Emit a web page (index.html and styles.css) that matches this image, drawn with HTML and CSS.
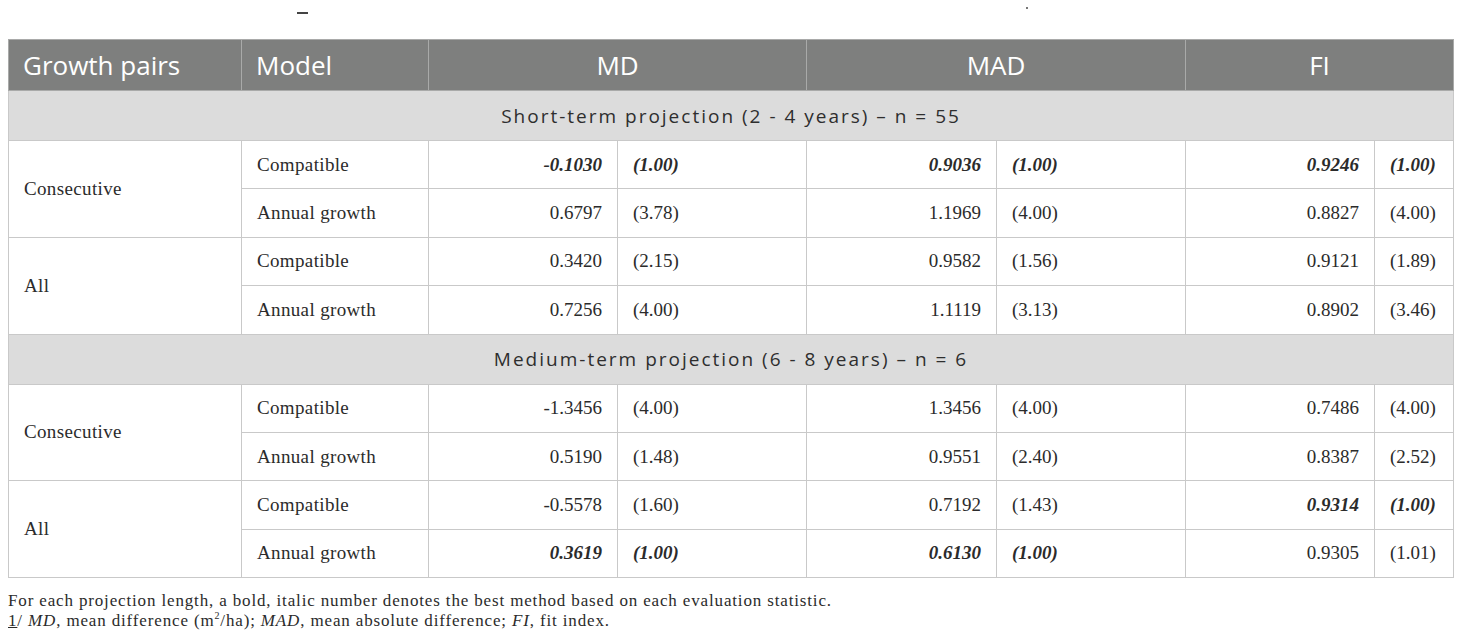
FILE: index.html
```html
<!DOCTYPE html>
<html>
<head>
<meta charset="utf-8">
<link rel="stylesheet" href="styles.css">
</head>
<body>
<div class="remnant"><span class="dash"></span><span class="dot"></span></div>
<table class="tbl">
<colgroup>
<col class="c-pair"><col class="c-model"><col class="c-val"><col class="c-rank"><col class="c-val2"><col class="c-rank"><col class="c-val"><col class="c-rank-last">
</colgroup>
<thead>
<tr class="head">
<th class="left">Growth pairs</th>
<th class="left">Model</th>
<th colspan="2">MD</th>
<th colspan="2">MAD</th>
<th colspan="2">FI</th>
</tr>
</thead>
<tbody>
<tr class="section"><td colspan="8">Short-term projection (2 - 4 years) – n = 55</td></tr>
<tr><td rowspan="2" class="grp">Consecutive</td><td class="mdl">Compatible</td><td class="num best">-0.1030</td><td class="rk best">(1.00)</td><td class="num best">0.9036</td><td class="rk best">(1.00)</td><td class="num best">0.9246</td><td class="rk best">(1.00)</td></tr>
<tr><td class="mdl">Annual growth</td><td class="num">0.6797</td><td class="rk">(3.78)</td><td class="num">1.1969</td><td class="rk">(4.00)</td><td class="num">0.8827</td><td class="rk">(4.00)</td></tr>
<tr><td rowspan="2" class="grp">All</td><td class="mdl">Compatible</td><td class="num">0.3420</td><td class="rk">(2.15)</td><td class="num">0.9582</td><td class="rk">(1.56)</td><td class="num">0.9121</td><td class="rk">(1.89)</td></tr>
<tr><td class="mdl">Annual growth</td><td class="num">0.7256</td><td class="rk">(4.00)</td><td class="num">1.1119</td><td class="rk">(3.13)</td><td class="num">0.8902</td><td class="rk">(3.46)</td></tr>
<tr class="section"><td colspan="8">Medium-term projection (6 - 8 years) – n = 6</td></tr>
<tr><td rowspan="2" class="grp">Consecutive</td><td class="mdl">Compatible</td><td class="num">-1.3456</td><td class="rk">(4.00)</td><td class="num">1.3456</td><td class="rk">(4.00)</td><td class="num">0.7486</td><td class="rk">(4.00)</td></tr>
<tr><td class="mdl">Annual growth</td><td class="num">0.5190</td><td class="rk">(1.48)</td><td class="num">0.9551</td><td class="rk">(2.40)</td><td class="num">0.8387</td><td class="rk">(2.52)</td></tr>
<tr><td rowspan="2" class="grp">All</td><td class="mdl">Compatible</td><td class="num">-0.5578</td><td class="rk">(1.60)</td><td class="num">0.7192</td><td class="rk">(1.43)</td><td class="num best">0.9314</td><td class="rk best">(1.00)</td></tr>
<tr><td class="mdl">Annual growth</td><td class="num best">0.3619</td><td class="rk best">(1.00)</td><td class="num best">0.6130</td><td class="rk best">(1.00)</td><td class="num">0.9305</td><td class="rk">(1.01)</td></tr>
</tbody>
</table>
<div class="notes">
<p>For each projection length, a bold, italic number denotes the best method based on each evaluation statistic.</p>
<p><u>1</u>/ <i>MD</i>, mean difference (m<sup>2</sup>/ha); <i>MAD</i>, mean absolute difference; <i>FI</i>, fit index.</p>
</div>
</body>
</html>
```
FILE: styles.css
```css
html, body {
  margin: 0;
  padding: 0;
  background: #ffffff;
}
body {
  padding: 0 8px;
  color: #2b2b2b;
  font-family: "Liberation Serif", "Times New Roman", serif;
}
.remnant {
  height: 39px;
  display: flex;
  align-items: flex-start;
}
.dash {
  margin-left: 289px;
  margin-top: 12px;
  width: 11px;
  height: 2px;
  background: #444;
}
.dot {
  margin-left: 718px;
  margin-top: 7px;
  width: 2px;
  height: 2px;
  background: #777;
}
.tbl {
  width: 1445px;
  border-collapse: collapse;
  table-layout: fixed;
}
.c-pair { width: 233px; }
.c-model { width: 187px; }
.c-val { width: 189px; }
.c-val2 { width: 190px; }
.c-rank { width: 189px; }
.c-rank-last { width: 79px; }
.tbl th, .tbl td {
  border: 1px solid #c9c9c9;
  padding: 0 15px;
}
.head th {
  background: #7e7f7e;
  color: #ffffff;
  font-family: "Open Sans", "Noto Sans", sans-serif;
  font-weight: 400;
  font-size: 26px;
  height: 50px;
  text-align: center;
  border-color: #a9aaa9;
}
.head th.left {
  text-align: left;
  padding-left: 14px;
}
.section td {
  background: #dcdcdc;
  font-family: "Open Sans", "Noto Sans", sans-serif;
  font-size: 25.5px;
  letter-spacing: 2px;
  color: #2e2e2e;
  text-align: center;
  height: 49px;
}
.tbl tbody tr {
  height: 48.4px;
}
.tbl td {
  font-size: 19px;
  vertical-align: middle;
}
.grp, .mdl {
  letter-spacing: 0.35px;
}
.grp {
  padding-left: 14px;
}
.num {
  text-align: right;
}
.rk {
  text-align: left;
}
.best {
  font-weight: 700;
  font-style: italic;
}
.notes {
  margin-top: 13px;
  font-size: 17px;
  line-height: 20px;
  letter-spacing: 0.85px;
  color: #2b2b2b;
}
.notes p {
  margin: 0;
}
.notes sup {
  font-size: 10px;
  line-height: 0;
}
```
